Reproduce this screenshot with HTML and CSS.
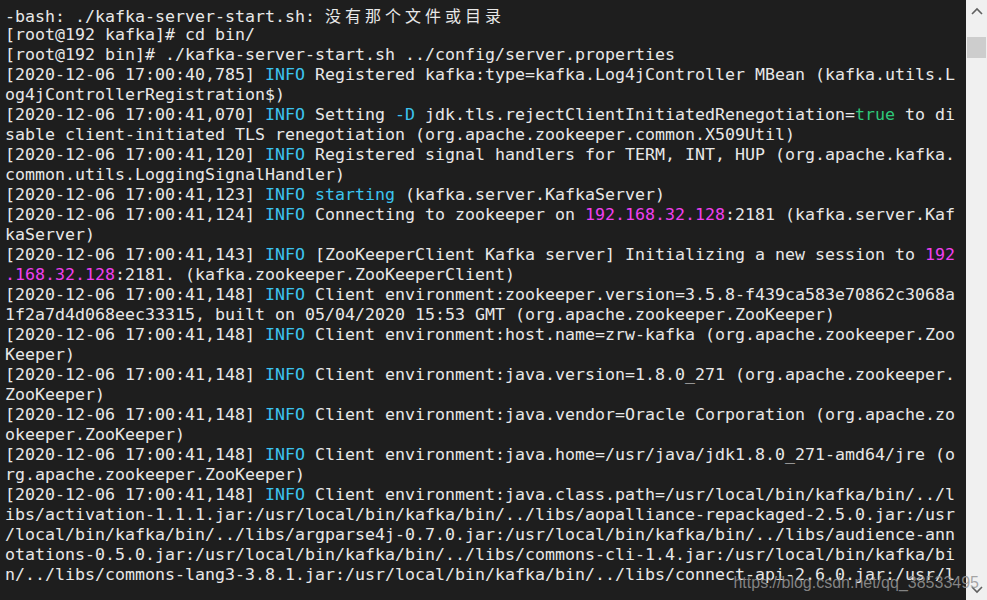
FILE: index.html
```html
<!DOCTYPE html>
<html lang="zh-CN">

<head>
    <meta charset="UTF-8">
    <title>kafka-server-start</title>
    <link rel="stylesheet" href="styles.css">
</head>

<body>
    <div class="window">
        <div class="terminal">
            <div class="row">-bash: ./kafka-server-start.sh: <span class="cjk">没有那个文件或目录</span></div>
            <div class="row">[root@192 kafka]# cd bin/</div>
            <div class="row">[root@192 bin]# ./kafka-server-start.sh ../config/server.properties</div>
            <div class="row">[2020-12-06 17:00:40,785] <span class="info">INFO</span> Registered kafka:type=kafka.Log4jController MBean (kafka.utils.L</div>
            <div class="row">og4jControllerRegistration$)</div>
            <div class="row">[2020-12-06 17:00:41,070] <span class="info">INFO</span> Setting <span class="info">-D</span> jdk.tls.rejectClientInitiatedRenegotiation=<span class="bool">true</span> to di</div>
            <div class="row">sable client-initiated TLS renegotiation (org.apache.zookeeper.common.X509Util)</div>
            <div class="row">[2020-12-06 17:00:41,120] <span class="info">INFO</span> Registered signal handlers for TERM, INT, HUP (org.apache.kafka.</div>
            <div class="row">common.utils.LoggingSignalHandler)</div>
            <div class="row">[2020-12-06 17:00:41,123] <span class="info">INFO</span> <span class="info">starting</span> (kafka.server.KafkaServer)</div>
            <div class="row">[2020-12-06 17:00:41,124] <span class="info">INFO</span> Connecting to zookeeper on <span class="ip">192.168.32.128</span>:2181 (kafka.server.Kaf</div>
            <div class="row">kaServer)</div>
            <div class="row">[2020-12-06 17:00:41,143] <span class="info">INFO</span> [ZooKeeperClient Kafka server] Initializing a new session to <span class="ip">192</span></div>
            <div class="row"><span class="ip">.168.32.128</span>:2181. (kafka.zookeeper.ZooKeeperClient)</div>
            <div class="row">[2020-12-06 17:00:41,148] <span class="info">INFO</span> Client environment:zookeeper.version=3.5.8-f439ca583e70862c3068a</div>
            <div class="row">1f2a7d4d068eec33315, built on 05/04/2020 15:53 GMT (org.apache.zookeeper.ZooKeeper)</div>
            <div class="row">[2020-12-06 17:00:41,148] <span class="info">INFO</span> Client environment:host.name=zrw-kafka (org.apache.zookeeper.Zoo</div>
            <div class="row">Keeper)</div>
            <div class="row">[2020-12-06 17:00:41,148] <span class="info">INFO</span> Client environment:java.version=1.8.0_271 (org.apache.zookeeper.</div>
            <div class="row">ZooKeeper)</div>
            <div class="row">[2020-12-06 17:00:41,148] <span class="info">INFO</span> Client environment:java.vendor=Oracle Corporation (org.apache.zo</div>
            <div class="row">okeeper.ZooKeeper)</div>
            <div class="row">[2020-12-06 17:00:41,148] <span class="info">INFO</span> Client environment:java.home=/usr/java/jdk1.8.0_271-amd64/jre (o</div>
            <div class="row">rg.apache.zookeeper.ZooKeeper)</div>
            <div class="row">[2020-12-06 17:00:41,148] <span class="info">INFO</span> Client environment:java.class.path=/usr/local/bin/kafka/bin/../l</div>
            <div class="row">ibs/activation-1.1.1.jar:/usr/local/bin/kafka/bin/../libs/aopalliance-repackaged-2.5.0.jar:/usr</div>
            <div class="row">/local/bin/kafka/bin/../libs/argparse4j-0.7.0.jar:/usr/local/bin/kafka/bin/../libs/audience-ann</div>
            <div class="row">otations-0.5.0.jar:/usr/local/bin/kafka/bin/../libs/commons-cli-1.4.jar:/usr/local/bin/kafka/bi</div>
            <div class="row">n/../libs/commons-lang3-3.8.1.jar:/usr/local/bin/kafka/bin/../libs/connect-api-2.6.0.jar:/usr/l</div>
        </div>
        <div class="scrollbar">
            <div class="arrow">
                <svg width="12" height="8" viewBox="0 0 12 8"><path d="M1 7 L6 2 L11 7" fill="none" stroke="#606060" stroke-width="1.6"/></svg>
            </div>
            <div class="track">
                <div class="thumb"></div>
            </div>
            <div class="arrow">
                <svg width="12" height="8" viewBox="0 0 12 8"><path d="M1 1 L6 6 L11 1" fill="none" stroke="#606060" stroke-width="1.6"/></svg>
            </div>
        </div>
        <div class="watermark">https://blog.csdn.net/qq_38533495</div>
    </div>
</body>

</html>
```

FILE: styles.css
```css
body {
    margin: 0;
    background-color: #1e1e1e;
    overflow: hidden;
}

.window {
    position: relative;
    display: flex;
    height: 600px;
}

.terminal {
    flex: 1;
    padding: 5px 0 0 5px;
    overflow: hidden;
    background-color: #1e1e1e;
    color: #e8e8e8;
    font-family: "DejaVu Sans Mono", "Noto Sans CJK SC", monospace;
    font-size: 16.62px;
    line-height: 20px;
}

.row {
    white-space: pre;
    height: 20px;
}

.cjk {
    font-family: "Noto Sans CJK SC", sans-serif;
    font-size: 16px;
    letter-spacing: 4px;
}

.info {
    color: #3cc4f0;
}

.bool {
    color: #2ec87a;
}

.ip {
    color: #f040f0;
}

.scrollbar {
    width: 21px;
    display: flex;
    flex-direction: column;
    background-color: #f0f0f0;
}

.arrow {
    height: 21px;
    display: flex;
    align-items: center;
    justify-content: center;
}

.track {
    flex: 1;
    padding: 16px 1px 0 1px;
}

.thumb {
    height: 21px;
    background-color: #cdcdcd;
}

.watermark {
    position: absolute;
    right: 8px;
    bottom: 8px;
    font-family: "Liberation Sans", Arial, sans-serif;
    font-size: 16px;
    color: rgba(150, 150, 150, 0.85);
}
```
